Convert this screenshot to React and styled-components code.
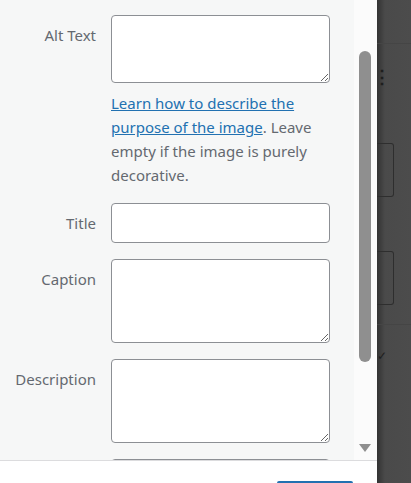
import React from "react";
import styled, { createGlobalStyle } from "styled-components";

const Global = createGlobalStyle`
  body { margin: 0; font-family: "Noto Sans", "Open Sans", sans-serif; }
`;

export default function App() {
    return (
        <Screen>
            <Global />
            <Modal>
                <Body>
                    <Sidebar>
                        <Row>
                            <Label>Alt Text</Label>
                            <Field>
                                <Area h={68} />
                                <Help>
                                    <a href="#">Learn how to describe the purpose of the image</a>. Leave empty if the image is purely decorative.
                                </Help>
                            </Field>
                        </Row>
                        <Row>
                            <Label>Title</Label>
                            <Field><Input /></Field>
                        </Row>
                        <Row>
                            <Label>Caption</Label>
                            <Field><Area h={84} /></Field>
                        </Row>
                        <Row>
                            <Label>Description</Label>
                            <Field><Area h={84} /></Field>
                        </Row>
                        <Row>
                            <Label />
                            <Field><Input /></Field>
                        </Row>
                    </Sidebar>
                    <Track>
                        <Thumb />
                        <Arrow />
                    </Track>
                </Body>
                <Footer>
                    <Button />
                </Footer>
            </Modal>
            <Backdrop>
                <Divider />
                <Dots>⋮</Dots>
                <GhostBox gap={54} />
                <GhostBox gap={19} />
                <Divider />
                <Check>✓</Check>
            </Backdrop>
        </Screen>
    );
}

const Screen = styled.div`
    display: flex;
    width: 411px;
    height: 483px;
    overflow: hidden;
`;
const Modal = styled.div`
    width: 377px;
    flex: none;
    display: flex;
    flex-direction: column;
    background: #fff;
`;
const Body = styled.div`
    height: 460px;
    display: flex;
    overflow: hidden;
`;
const Sidebar = styled.div`
    width: 354px;
    background: #f6f7f7;
    padding-top: 15px;
    box-sizing: border-box;
`;
const Row = styled.div`
    display: flex;
    margin-bottom: 16px;
`;
const Label = styled.div`
    width: 96px;
    text-align: right;
    padding-top: 10px;
    margin-right: 15px;
    font-size: 15px;
    color: #646970;
    line-height: 1.4;
    flex: none;
`;
const Field = styled.div`
    width: 219px;
`;
const Area = styled.textarea`
    display: block;
    width: 219px;
    height: ${p => p.h}px;
    box-sizing: border-box;
    border: 1px solid #8c8f94;
    border-radius: 4px;
    background: #fff;
    margin: 0;
`;
const Input = styled.input`
    display: block;
    width: 219px;
    height: 40px;
    box-sizing: border-box;
    border: 1px solid #8c8f94;
    border-radius: 4px;
    background: #fff;
`;
const Help = styled.p`
    margin: 8px 0 0;
    font-size: 15px;
    line-height: 24px;
    color: #646970;
    a { color: #2271b1; }
`;
const Track = styled.div`
    width: 23px;
    background: #fbfbfb;
    position: relative;
`;
const Thumb = styled.div`
    position: absolute;
    left: 5px;
    top: 51px;
    width: 12px;
    height: 311px;
    border-radius: 6px;
    background: #8f8f8f;
`;
const Arrow = styled.div`
    position: absolute;
    left: 5px;
    top: 444px;
    width: 0;
    height: 0;
    border-left: 6px solid transparent;
    border-right: 6px solid transparent;
    border-top: 8px solid #8f8f8f;
`;
const Footer = styled.div`
    flex: 1;
    border-top: 1px solid #dcdcde;
    display: flex;
    justify-content: flex-end;
    align-items: flex-end;
    padding-right: 24px;
`;
const Button = styled.div`
    width: 76px;
    height: 2px;
    background: #2271b1;
    border-radius: 3px 3px 0 0;
`;
const Backdrop = styled.div`
    flex: 1;
    background: linear-gradient(90deg, #333 0, #4a4a4a 8px, #4c4c4c);
    padding-top: 43px;
    display: flex;
    flex-direction: column;
    align-items: flex-start;
`;
const Divider = styled.div`
    width: 100%;
    height: 1px;
    background: #454545;
`;
const Dots = styled.div`
    color: #1e1e1e;
    font-size: 18px;
    font-weight: bold;
    margin: 17px 0 0 -4px;
    line-height: 30px;
    height: 82px;
`;
const GhostBox = styled.div`
    width: 16px;
    height: 52px;
    border: 1px solid #2e2e2e;
    border-left: none;
    border-radius: 0 3px 3px 0;
    margin-bottom: ${p => p.gap}px;
`;
const Check = styled.div`
    color: #1e1e1e;
    font-size: 12px;
    margin: 22px 0 0 0;
`;
